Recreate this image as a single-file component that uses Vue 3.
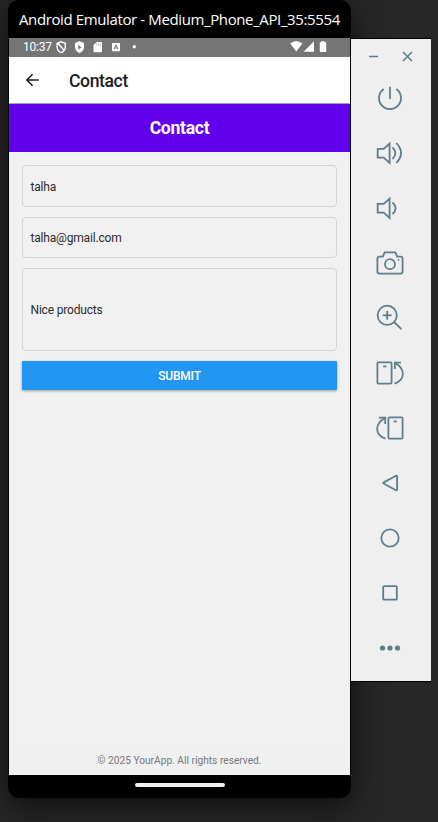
<script setup>
const fields = [
  { text: 'talha', kind: 'name' },
  { text: 'talha@gmail.com', kind: 'email' },
  { text: 'Nice products', kind: 'message' },
]

const tools = [
  { name: 'Power', paths: ['M-6.3 -9A11 11 0 1 0 6.3 -9', 'M0 -11.3V1'] },
  {
    name: 'Volume up',
    paths: ['M-12.3 -4.2H-6.3L-.4 -9.5V10L-6.3 4.7H-12.3Z', 'M2.5 -5.5Q8.3 0 2.5 6', 'M6.3 -10Q15.8 0 6.3 10'],
  },
  { name: 'Volume down', paths: ['M-12.3 -4.2H-6.3L-.4 -9.5V10L-6.3 4.7H-12.3Z', 'M2.5 -5.5Q8.8 0 2.5 6'] },
  {
    name: 'Screenshot',
    paths: [
      'M-10.5 -6.4H-7.2L-5.3 -10.7H5.3L7.2 -6.4H10.5Q12.6 -6.4 12.6 -4.4V8.6Q12.6 10.6 10.5 10.6H-10.5Q-12.6 10.6 -12.6 8.6V-4.4Q-12.6 -6.4 -10.5 -6.4Z',
      'M-5 1.2a5 5 0 1 0 10 0a5 5 0 1 0 -10 0',
      'M7.8 -3H9.2',
    ],
  },
  {
    name: 'Zoom',
    paths: ['M-12.4 -2.7a9.6 9.6 0 1 0 19.2 0a9.6 9.6 0 1 0 -19.2 0', 'M-7.2 -2.7H1.6', 'M-2.8 -7.1V1.7', 'M4 4L11.4 11.2'],
  },
  {
    name: 'Rotate left',
    paths: ['M-11.6 -10.6H.6Q1.6 -10.6 1.6 -9.6V9.6Q1.6 10.6 .6 10.6H-11.6Q-12.6 10.6 -12.6 9.6V-9.6Q-12.6 -10.6 -11.6 -10.6Z', 'M-6.8 -6.6H-3.6', 'M11 -10.3H4.8V-4', 'M5.2 -9.8C15 -5 16 7 4.5 10.6'],
  },
  {
    name: 'Rotate right',
    paths: ['M11.6 -10.6H-.6Q-1.6 -10.6 -1.6 -9.6V9.6Q-1.6 10.6 -.6 10.6H11.6Q12.6 10.6 12.6 9.6V-9.6Q12.6 -10.6 11.6 -10.6Z', 'M6.8 -6.6H3.6', 'M-11 -10.3H-4.8V-4', 'M-5.2 -9.8C-15 -5 -16 7 -4.5 10.6'],
  },
  { name: 'Back', paths: ['M-6.3 -.6L6 -7.2Q7.1 -7.6 7.1 -6.5V6.5Q7.1 7.6 6 7.2L-6.3 .6Q-7.2 0 -6.3 -.6Z'] },
  { name: 'Home', paths: ['M-8.7 0a8.7 8.7 0 1 0 17.4 0a8.7 8.7 0 1 0 -17.4 0'] },
  { name: 'Overview', paths: ['M-5.8 -6.9H5.8Q6.8 -6.9 6.8 -5.9V5.7Q6.8 6.7 5.8 6.7H-5.8Q-6.8 6.7 -6.8 5.7V-5.9Q-6.8 -6.9 -5.8 -6.9Z'] },
  { name: 'More', dots: [-7.5, 0, 7.5] },
]
</script>

<template>
  <main class="desktop">
    <section class="phone">
      <div class="window-title"><span>Android Emulator - Medium_Phone_API_35:5554</span></div>
      <div class="screen">
        <div class="status">
          <span class="clock">10:37</span>
          <svg class="notices" width="90" height="19" viewBox="0 0 90 19">
            <path d="M5.2 3.8L9.3 5.3V9.2Q9.1 12.8 5.2 14.6Q1.3 12.8 1.1 9.2V5.3ZM1.5 4.8L8.2 12.5" fill="none" stroke="#fff" stroke-width="1.4" />
            <path d="M23.5 3.2L28 5V9Q28 13.2 23.5 15Q19 13.2 19 9V5Z" fill="#fff" />
            <path d="M22.2 7L25.6 9.2L22.2 11.4Z" fill="#757575" />
            <path d="M40.6 4H45.2Q46 4 46 4.8V13.4Q46 14.2 45.2 14.2H38.3Q37.5 14.2 37.5 13.4V7Z" fill="#fff" />
            <path d="M40.3 5.6V7.6M42.3 5.6V7.6M44.3 5.6V7.6" stroke="#999" stroke-width=".7" />
            <rect x="56" y="5" width="8" height="8.3" rx=".8" fill="#fff" />
            <path d="M58 11.4L60 6.8L62 11.4M58.8 10H61.2" fill="none" stroke="#757575" stroke-width="1" />
            <circle cx="78.3" cy="8.8" r="1.7" fill="#fff" />
          </svg>
          <svg class="signals" width="38" height="19" viewBox="0 0 38 19">
            <path d="M.2 5.6Q6.3 .6 12.4 5.6L6.3 13.6Z" fill="#fff" />
            <path d="M24 3.3V13.8H13.6Z" fill="#fff" />
            <path d="M31.3 3.2H34.6V4.3H36.2V14H29.8V4.3H31.3Z" fill="#fff" />
          </svg>
        </div>
        <header class="app-bar">
          <svg width="16" height="16" viewBox="0 0 16 16">
            <path d="M14.8 8H3.2M8.6 2.2L2.8 8L8.6 13.8" fill="none" stroke="#1c1b1f" stroke-width="1.5" />
          </svg>
          <span class="app-title">Contact</span>
        </header>
        <div class="banner">Contact</div>
        <div class="form">
          <div v-for="field in fields" :key="field.kind" class="field" :class="field.kind">{{ field.text }}</div>
          <div class="submit">SUBMIT</div>
        </div>
        <footer class="footer">© 2025 YourApp. All rights reserved.</footer>
      </div>
      <div class="nav"><div class="handle"></div></div>
    </section>

    <aside class="tools">
      <div class="window-buttons">
        <svg width="80" height="31" viewBox="0 0 80 31">
          <path d="M18 17.6H27M52 13L61 22M61 13L52 22" fill="none" stroke="#607d8b" stroke-width="1.5" />
        </svg>
      </div>
      <svg v-for="tool in tools" :key="tool.name" class="tool" width="78" height="55" viewBox="-39 -28 78 55">
        <path v-for="path in tool.paths" :key="path" :d="path" />
        <circle v-for="x in tool.dots" :key="x" :cx="x" cy="0" r="2.6" />
      </svg>
    </aside>
  </main>
</template>

<style>
body {
  background: #272727;
}
</style>

<style scoped>
.desktop {
  box-sizing: border-box;
  width: 438px;
  height: 822px;
  padding-left: 8px;
  display: flex;
  align-items: flex-start;
  overflow: hidden;
  background: #272727;
  font-family: Roboto, "Liberation Sans", sans-serif;
}
.phone {
  box-sizing: border-box;
  width: 343px;
  height: 798px;
  padding: 0 1px;
  display: flex;
  flex-direction: column;
  background: #000;
  border-radius: 11px;
  box-shadow: 0 8px 32px rgba(0, 0, 0, 0.65);
}
.window-title {
  height: 38px;
  padding-left: 10px;
  display: flex;
  align-items: center;
  color: #fff;
  font: 15px/20px "Open Sans", "Noto Sans", sans-serif;
  letter-spacing: -0.38px;
  white-space: nowrap;
}
.screen {
  height: 737px;
  display: flex;
  flex-direction: column;
  background: #f1f1f1;
}
.status {
  height: 19px;
  display: flex;
  flex: none;
  background: #757575;
  color: #fff;
}
.clock {
  width: 33px;
  padding-left: 14px;
  font-size: 12px;
  line-height: 18px;
  letter-spacing: -0.2px;
}
.signals {
  margin-left: auto;
  margin-right: 22px;
}
.app-bar {
  box-sizing: border-box;
  height: 47px;
  flex: none;
  padding: 0 15px;
  display: flex;
  align-items: center;
  gap: 29px;
  background: #fff;
  border-bottom: 1px solid #a5a0b0;
  color: #1c1b1f;
}
.app-title {
  padding-top: 1px;
  font-size: 17.6px;
  font-weight: 500;
  line-height: 20px;
  letter-spacing: -0.4px;
}
.banner {
  height: 48px;
  flex: none;
  background: #6200ee;
  color: #fff;
  font-size: 17.6px;
  font-weight: 700;
  line-height: 49px;
  letter-spacing: -0.3px;
  text-align: center;
}
.form {
  padding: 13px 13px 0;
  display: flex;
  flex-direction: column;
  gap: 10px;
}
.field {
  box-sizing: border-box;
  height: 41px;
  padding: 0 7.5px;
  display: flex;
  align-items: center;
  border: 1px solid #d3d3d3;
  border-radius: 4px;
  color: #2c2c2c;
  font-size: 12px;
  letter-spacing: -0.18px;
}
.name {
  height: 42px;
  padding-top: 2px;
}
.message {
  height: 83px;
}
.submit {
  height: 29px;
  background: #2196f3;
  border-radius: 1px;
  box-shadow: 0 1px 3px rgba(0, 0, 0, 0.35);
  color: #fff;
  font-size: 12px;
  font-weight: 500;
  line-height: 30px;
  letter-spacing: -0.2px;
  text-align: center;
}
.footer {
  height: 31px;
  margin-top: auto;
  background: #f0f0f0;
  color: #777;
  font-size: 10.2px;
  line-height: 34px;
  text-align: center;
}
.nav {
  height: 20px;
  display: flex;
  align-items: center;
  justify-content: center;
}
.handle {
  width: 90px;
  height: 4px;
  border-radius: 2px;
  background: #f1f1f1;
}
.tools {
  box-sizing: border-box;
  position: relative;
  width: 80px;
  height: 644px;
  margin-top: 38px;
  display: flex;
  flex-direction: column;
  border-top: 1px solid #000;
  border-bottom: 1px solid #000;
  background: #efefef;
}
.window-buttons {
  height: 31px;
}
.window-buttons svg,
.tool {
  display: block;
  flex: none;
}
.tool path {
  fill: none;
  stroke: #607d8b;
  stroke-width: 1.8;
}
.tool circle {
  fill: #607d8b;
}
</style>
